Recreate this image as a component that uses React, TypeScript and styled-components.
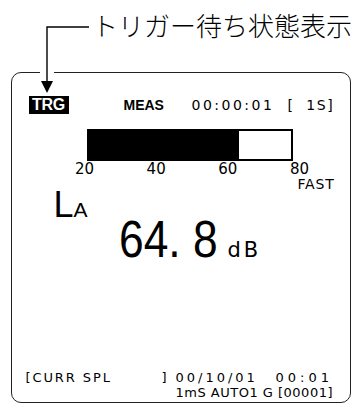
import styled, { createGlobalStyle } from 'styled-components';

const GlobalStyle = createGlobalStyle`
  html, body {
    margin: 0;
    padding: 0;
    background: #ffffff;
  }
  body {
    width: 357px;
    height: 405px;
    overflow: hidden;
    color: #000;
    font-family: "DejaVu Sans", "Liberation Sans", sans-serif;
  }
`;

const Page = styled.div`
  position: relative;
  width: 357px;
  height: 405px;
`;

const Callout = styled.div`
  height: 72px;
  display: flex;
  align-items: flex-start;
  padding-left: 92px;
  box-sizing: border-box;
`;

const Caption = styled.span`
  margin-top: 10px;
  font-family: "Noto Sans CJK JP", sans-serif;
  font-weight: 200;
  font-size: 26px;
  line-height: 30px;
  white-space: nowrap;
`;

// leader arrow lies over the frame border, so it is placed on top
const Leader = styled.svg`
  position: absolute;
  left: 38px;
  top: 20px;
  overflow: visible;
`;

const Frame = styled.div`
  margin-left: 11px;
  width: 340px;
  height: 331px;
  box-sizing: border-box;
  border: 1.5px solid #222;
  border-radius: 10px;
  display: flex;
  flex-direction: column;
  padding-top: 23px;
`;

const HeaderRow = styled.div`
  display: flex;
  align-items: center;
  height: 18px;
  margin-left: 16.5px;
`;

const Slot = styled.div<{ $w: number; $spacing?: number; $bold?: boolean; $size?: number }>`
  width: ${({ $w }) => $w}px;
  flex: none;
  font-family: ${({ $bold }) => ($bold ? '"Liberation Sans", sans-serif' : '"DejaVu Sans", sans-serif')};
  font-weight: ${({ $bold }) => ($bold ? 700 : 400)};
  font-size: ${({ $size = 14 }) => $size}px;
  line-height: inherit;
  white-space: pre;
  letter-spacing: ${({ $spacing = 0 }) => $spacing}px;
`;

const TrgBadge = styled.span`
  display: inline-flex;
  align-items: center;
  justify-content: center;
  width: 40px;
  height: 18px;
  background: #000;
  color: #fff;
  font-family: "Liberation Sans", sans-serif;
  font-weight: 700;
  font-size: 16px;
  letter-spacing: -0.3px;
`;

const MeterBlock = styled.div`
  margin: 15px 0 0 62.5px;
  width: 235px;
`;

const Bar = styled.div`
  margin-left: 12px;
  width: 206px;
  height: 32px;
  box-sizing: border-box;
  border: 2px solid #000;
  background: #fff;
`;

const Fill = styled.div`
  height: 100%;
  background: #000;
`;

const Scale = styled.div`
  display: flex;
  justify-content: space-between;
  margin-top: 1px;
`;

const Tick = styled.span`
  width: 20px;
  text-align: center;
  font-size: 15px;
  line-height: 14px;
`;

const Response = styled.div`
  margin: 1px 0 0 285.5px;
  font-size: 14px;
  line-height: 14px;
  letter-spacing: 0.8px;
`;

const QuantityRow = styled.div`
  margin: 0 0 0 41.5px;
  display: flex;
  align-items: baseline;
  height: 28px;
`;

const QuantityMain = styled.span`
  font-family: "Liberation Sans", sans-serif;
  font-size: 36px;
  line-height: 28px;
`;

const QuantitySub = styled.span`
  font-family: "Liberation Sans", sans-serif;
  font-size: 21px;
  line-height: 20px;
`;

const ValueRow = styled.div`
  margin: 0 0 0 107px;
  display: flex;
  align-items: baseline;
`;

const Reading = styled.span`
  display: inline-block;
  font-family: "Liberation Sans", sans-serif;
  font-size: 51px;
  line-height: 42px;
  transform: scaleX(0.87);
  transform-origin: left center;
  white-space: pre;
`;

const Unit = styled.span`
  margin-left: -5px;
  font-size: 21px;
  letter-spacing: 3px;
`;

const Footer = styled.div`
  margin: auto 0 0 13.5px;
  padding-bottom: 2px;
  display: flex;
  flex-direction: column;
`;

const FooterLine = styled.div<{ $indent?: number }>`
  display: flex;
  padding-left: ${({ $indent = 0 }) => $indent}px;
  height: 15px;
  line-height: 15px;
`;

const level = 64.8;
const fillPct = ((level - 20) / 60) * 100;

export default function App() {
  return (
    <Page>
      <GlobalStyle />
      <Callout>
        <Caption>トリガー待ち状態表示</Caption>
      </Callout>
      <Leader width="54" height="74" viewBox="0 0 54 74">
        <rect x="2" y="50" width="14" height="5" fill="#fff" />
        <polyline points="51,7 9,7 9,62" fill="none" stroke="#000" strokeWidth="1.4" />
        <polygon points="3,61 15,61 9,73" fill="#000" />
      </Leader>
      <Frame>
        <HeaderRow>
          <Slot $w={95}>
            <TrgBadge>TRG</TrgBadge>
          </Slot>
          <Slot $w={68} $bold>MEAS</Slot>
          <Slot $w={96} $spacing={2.5}>00:00:01</Slot>
          <Slot $w={60} $spacing={1.5}>{'[  1S]'}</Slot>
        </HeaderRow>
        <MeterBlock>
          <Bar>
            <Fill style={{ width: `${fillPct}%` }} />
          </Bar>
          <Scale>
            <Tick>20</Tick>
            <Tick>40</Tick>
            <Tick>60</Tick>
            <Tick>80</Tick>
          </Scale>
        </MeterBlock>
        <Response>FAST</Response>
        <QuantityRow>
          <QuantityMain>L</QuantityMain>
          <QuantitySub>A</QuantitySub>
        </QuantityRow>
        <ValueRow>
          <Reading>64. 8</Reading>
          <Unit>dB</Unit>
        </ValueRow>
        <Footer>
          <FooterLine>
            <Slot $w={136} $size={13} $spacing={1.9}>[CURR SPL</Slot>
            <Slot $w={14} $size={13}>]</Slot>
            <Slot $w={100} $size={13} $spacing={3}>00/10/01</Slot>
            <Slot $w={64} $size={13} $spacing={4}>00:01</Slot>
          </FooterLine>
          <FooterLine $indent={150}>
            <Slot $w={180} $size={13} $spacing={0.5}>1mS AUTO1 G [00001]</Slot>
          </FooterLine>
        </Footer>
      </Frame>
    </Page>
  );
}
